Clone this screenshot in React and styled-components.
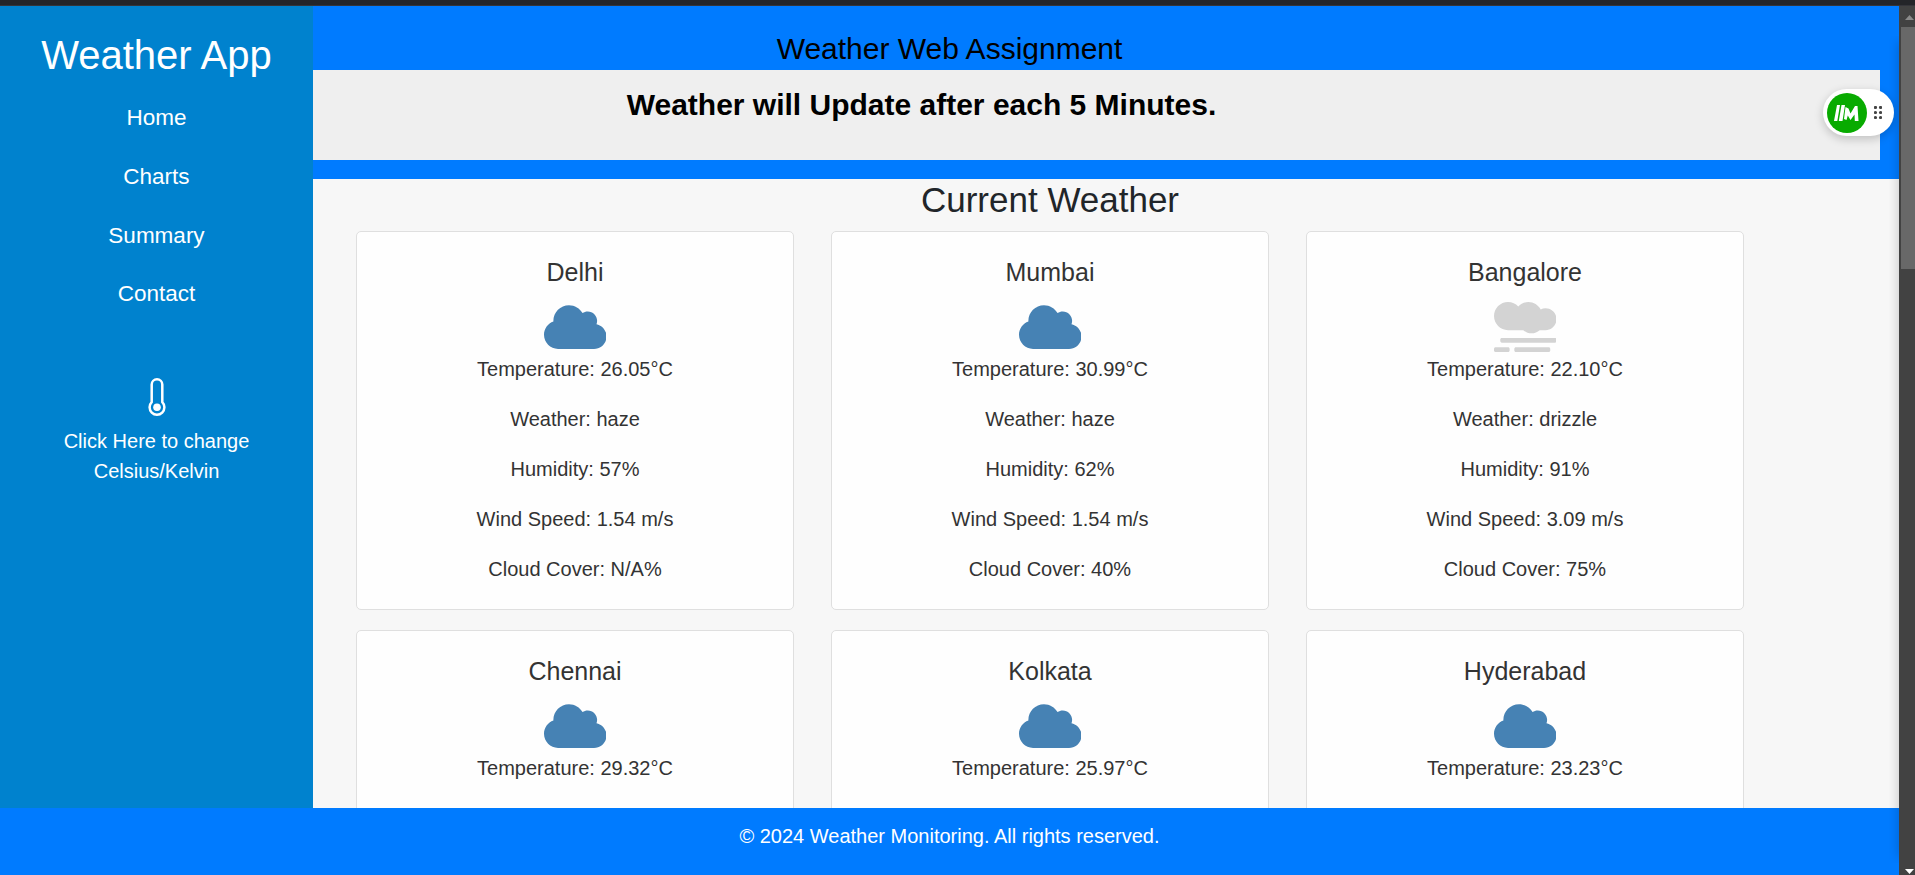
import React from "react";
import styled, { createGlobalStyle } from "styled-components";
import { FaCloud, FaSmog } from "react-icons/fa";

const GlobalStyle = createGlobalStyle`
  * { box-sizing: border-box; }
  body {
    margin: 0;
    overflow: hidden;
    font-family: "Liberation Sans", Arial, sans-serif;
    font-size: 20px;
    line-height: 30px;
    color: #212529;
  }
  h1, h2, h3, h4, p { margin: 0; font-weight: 400; }
`;

const Window = styled.div`
  display: flex;
  flex-direction: column;
  height: 875px;
  border-top: 5px solid #242529;
  background: #f7f7f7;
`;

const Viewport = styled.div`
  display: flex;
  flex: 1;
  min-height: 0;
  border-top: 1px solid #35353a;
`;

const Page = styled.div`
  position: relative;
  display: flex;
  flex-direction: column;
  flex: 1;
  min-width: 0;
`;

const Body = styled.div`
  display: flex;
  height: 802px;
`;

const Sidebar = styled.aside`
  display: flex;
  flex-direction: column;
  align-items: center;
  flex: 0 0 313px;
  padding-top: 25px;
  background: #0082ce;
  color: #fff;
  text-align: center;
`;

const Brand = styled.h1`
  font-size: 40px;
  line-height: 48px;
`;

const Nav = styled.nav`
  display: flex;
  flex-direction: column;
  gap: 25px;
  margin-top: 22px;
`;

const NavLink = styled.a`
  font-size: 22.5px;
  line-height: 33.75px;
  color: #fff;
`;

const UnitToggle = styled.div`
  display: flex;
  flex-direction: column;
  align-items: center;
  width: 220px;
  margin-top: 67px;

  svg { margin-bottom: 10px; }
`;

const Main = styled.main`
  display: flex;
  flex-direction: column;
  flex: 1;
  min-width: 0;
  overflow: hidden;
`;

const Header = styled.header`
  flex: 0 0 173px;
  padding: 22px 19px 19px 0;
  background: #007bff;
  color: #000;
  text-align: center;
`;

const HeaderTitle = styled.h2`
  padding-right: 294px;
  font-size: 30px;
  line-height: 42px;
`;

const Notice = styled.div`
  height: 90px;
  padding: 17px 350px 0 0;
  background: #efefef;
  font-size: 30px;
  font-weight: 700;
  line-height: 36px;
`;

const Forecast = styled.section`
  width: 1388px;
  margin-left: 43px;
`;

const ForecastTitle = styled.h2`
  height: 52px;
  font-size: 35px;
  line-height: 42px;
  text-align: center;
`;

const CardGrid = styled.div`
  display: grid;
  grid-template-columns: repeat(3, 438px);
  grid-auto-rows: 379px;
  gap: 20px 37px;
`;

const Card = styled.article`
  display: flex;
  flex-direction: column;
  align-items: center;
  padding-top: 25px;
  border: 1px solid #dfdfdf;
  border-radius: 5px;
  background: #fefefe;
  color: #333;

  svg {
    flex-shrink: 0;
    width: 62.5px;
    height: 50px;
    margin-bottom: 2px;
  }
`;

const City = styled.h3`
  margin-bottom: 15px;
  font-size: 25px;
  line-height: 30px;
`;

const Reading = styled.p`
  margin-bottom: 20px;
`;

const Footer = styled.footer`
  flex: 1;
  padding-top: 13px;
  background: #007bff;
  color: #fff;
  text-align: center;
`;

const EdgeShadow = styled.div`
  position: absolute;
  top: 30px;
  right: 0;
  bottom: 12px;
  width: 10px;
  overflow: hidden;

  &::after {
    content: "";
    position: absolute;
    top: 6px;
    bottom: 6px;
    left: 100%;
    width: 10px;
    box-shadow: 0 0 12px rgba(0, 0, 0, 0.22);
  }
`;

const Widget = styled.div`
  position: absolute;
  top: 83px;
  right: 5px;
  display: flex;
  align-items: center;
  gap: 7px;
  width: 71px;
  height: 47px;
  padding-left: 4px;
  border-radius: 24px;
  background: #fff;
  box-shadow: 0 3px 10px rgba(0, 0, 0, 0.2);
`;

const ScrollTrack = styled.div`
  display: flex;
  flex-direction: column;
  align-items: flex-end;
  flex: 0 0 16px;
  background: #424242;
`;

const ScrollThumb = styled.div`
  width: 14px;
  height: 242px;
  margin-bottom: auto;
  background: #686868;
`;

const ScrollArrow = styled.svg`
  display: block;
  width: 14px;
  height: ${(p) => p.$height}px;
`;

const cities = [
  ["Delhi", FaCloud, "26.05", "haze", "57", "1.54", "N/A"],
  ["Mumbai", FaCloud, "30.99", "haze", "62", "1.54", "40"],
  ["Bangalore", FaSmog, "22.10", "drizzle", "91", "3.09", "75"],
  ["Chennai", FaCloud, "29.32"],
  ["Kolkata", FaCloud, "25.97"],
  ["Hyderabad", FaCloud, "23.23"],
];

function WeatherCard({ data }) {
  const [city, Icon, temperature, weather, humidity, wind, clouds] = data;
  return (
    <Card>
      <City>{city}</City>
      <Icon color={Icon === FaSmog ? "#d3d3d3" : "#4682b4"} />
      <Reading>Temperature: {temperature}°C</Reading>
      {weather && (
        <>
          <Reading>Weather: {weather}</Reading>
          <Reading>Humidity: {humidity}%</Reading>
          <Reading>Wind Speed: {wind} m/s</Reading>
          <Reading>Cloud Cover: {clouds}%</Reading>
        </>
      )}
    </Card>
  );
}

function Thermometer() {
  return (
    <svg width="18" height="38" viewBox="0 0 18 38">
      <path
        d="M3.7 24.1V6.6a5.3 5.3 0 0 1 10.600 0V24.100A7.400 7.400 0 1 1 3.700 24.100Z"
        fill="none"
        stroke="#fff"
        strokeWidth="2.5"
      />
      <circle cx="9" cy="29.3" r="3.8" fill="#fff" />
    </svg>
  );
}

export default function App() {
  return (
    <Window>
      <GlobalStyle />
      <Viewport>
        <Page>
          <Body>
            <Sidebar>
              <Brand>Weather App</Brand>
              <Nav>
                {["Home", "Charts", "Summary", "Contact"].map((n) => (
                  <NavLink key={n}>{n}</NavLink>
                ))}
              </Nav>
              <UnitToggle>
                <Thermometer />
                <p>Click Here to change Celsius/Kelvin</p>
              </UnitToggle>
            </Sidebar>
            <Main>
              <Header>
                <HeaderTitle>Weather Web Assignment</HeaderTitle>
                <Notice>Weather will Update after each 5 Minutes.</Notice>
              </Header>
              <Forecast>
                <ForecastTitle>Current Weather</ForecastTitle>
                <CardGrid>
                  {cities.map((c) => (
                    <WeatherCard key={c[0]} data={c} />
                  ))}
                </CardGrid>
              </Forecast>
            </Main>
          </Body>
          <Footer>© 2024 Weather Monitoring. All rights reserved.</Footer>
          <EdgeShadow />
          <Widget>
            <svg width="40" height="40" viewBox="0 0 40 40">
              <circle cx="20" cy="20" r="20" fill="#08ab00" />
              <path
                d="M7 28 10 12H13L10.300 28ZM11.800 28 14.500 12H18L15.500 28ZM17 26 18.500 14 21.500 15.500 23.500 20.500 28 13H30.500L31.500 28H27.800L27.500 21.500 23.500 27 20.800 22.500 19.500 27Z"
                fill="#fff"
              />
            </svg>
            <svg width="8" height="13" viewBox="0 0 8 13" fill="#444">
              {[1.5, 6.5].map((x) => [1.5, 6.5, 11.5].map((y) => <circle key={`${x}-${y}`} cx={x} cy={y} r="1.6" />))}
            </svg>
          </Widget>
        </Page>
        <ScrollTrack>
          <ScrollArrow $height={21} viewBox="0 0 14 21">
            <path d="M4 14 8.500 9 13 14Z" fill="#8b8b8b" />
          </ScrollArrow>
          <ScrollThumb />
          <ScrollArrow $height={16} viewBox="0 0 14 16">
            <path d="M4 10H13L8.500 15Z" fill="#fff" />
          </ScrollArrow>
        </ScrollTrack>
      </Viewport>
    </Window>
  );
}
